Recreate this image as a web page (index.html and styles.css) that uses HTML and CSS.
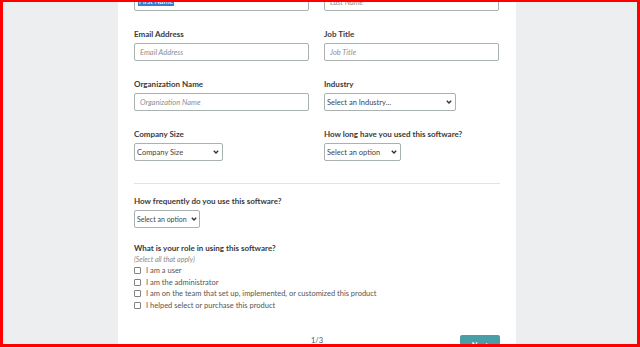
FILE: index.html
```html
<!DOCTYPE html>
<html lang="en">
<head>
    <meta charset="UTF-8">
    <meta name="viewport" content="width=device-width, initial-scale=1.0">
    <title>Review - Step 1</title>
    <link rel="stylesheet" href="styles.css">
</head>
<body>
    <div class="frame">
        <main class="card">
            <form class="survey">
                <div class="row">
                    <div class="field">
                        <label>First Name</label>
                        <div class="input fake-input"><span class="selected">First Name</span></div>
                    </div>
                    <div class="field">
                        <label>Last Name</label>
                        <input class="input" type="text" placeholder="Last Name">
                    </div>
                </div>

                <div class="row">
                    <div class="field">
                        <label for="email">Email Address</label>
                        <input class="input" id="email" type="text" placeholder="Email Address">
                    </div>
                    <div class="field">
                        <label for="job">Job Title</label>
                        <input class="input" id="job" type="text" placeholder="Job Title">
                    </div>
                </div>

                <div class="row">
                    <div class="field">
                        <label for="org">Organization Name</label>
                        <input class="input" id="org" type="text" placeholder="Organization Name">
                    </div>
                    <div class="field">
                        <label for="industry">Industry</label>
                        <div class="select-wrap select-industry">
                            <select class="select" id="industry">
                                <option>Select an Industry...</option>
                            </select>
                            <svg class="chevron" viewBox="0 0 6 4"><path d="M0.8 0.8 L3 3 L5.2 0.8" /></svg>
                        </div>
                    </div>
                </div>

                <div class="row">
                    <div class="field">
                        <label for="size">Company Size</label>
                        <div class="select-wrap select-size">
                            <select class="select" id="size">
                                <option>Company Size</option>
                            </select>
                            <svg class="chevron" viewBox="0 0 6 4"><path d="M0.8 0.8 L3 3 L5.2 0.8" /></svg>
                        </div>
                    </div>
                    <div class="field">
                        <label for="used">How long have you used this software?</label>
                        <div class="select-wrap select-option">
                            <select class="select" id="used">
                                <option>Select an option</option>
                            </select>
                            <svg class="chevron" viewBox="0 0 6 4"><path d="M0.8 0.8 L3 3 L5.2 0.8" /></svg>
                        </div>
                    </div>
                </div>

                <hr class="divider">

                <div class="field">
                    <label for="freq">How frequently do you use this software?</label>
                    <div class="select-wrap select-short">
                        <select class="select" id="freq">
                            <option>Select an option</option>
                        </select>
                        <svg class="chevron" viewBox="0 0 6 4"><path d="M0.8 0.8 L3 3 L5.2 0.8" /></svg>
                    </div>
                </div>

                <div class="role">
                    <p class="role-title">What is your role in using this software?</p>
                    <p class="hint">(Select all that apply)</p>
                    <label class="check"><input type="checkbox"> I am a user</label>
                    <label class="check"><input type="checkbox"> I am the administrator</label>
                    <label class="check"><input type="checkbox"> I am on the team that set up, implemented, or customized this product</label>
                    <label class="check"><input type="checkbox"> I helped select or purchase this product</label>
                </div>

                <div class="footer">
                    <span></span>
                    <span class="step">1/3</span>
                    <button type="button" class="next-btn">Next</button>
                </div>
            </form>
        </main>
    </div>
</body>
</html>
```

FILE: styles.css
```css
* {
    box-sizing: border-box;
}
html, body {
    margin: 0;
    height: 100%;
}
body {
    font-family: 'Lato', 'Liberation Sans', sans-serif;
    color: #333;
    overflow: hidden;
}
.frame {
    height: 347px;
    border: 3px solid #f00;
    border-top-width: 2px;
    background-color: #eceef0;
    overflow: hidden;
}
.card {
    display: flow-root;
    margin-left: 115px;
    width: 398px;
    height: 100%;
    background-color: #fff;
    padding: 0 16px;
}
.survey {
    margin-top: -23px;
}
.row {
    display: grid;
    grid-template-columns: 175px 175px;
    column-gap: 15px;
    margin-bottom: 18px;
}
.field label {
    display: block;
    font-size: 8px;
    line-height: 10px;
    font-weight: 700;
    color: #3a3a3a;
    margin-bottom: 4px;
}
.input {
    display: block;
    width: 175px;
    height: 18px;
    border: 1px solid #a9b1b1;
    border-radius: 2px;
    padding: 0 5px;
    font-family: inherit;
    font-size: 7.5px;
    color: #444;
    background: #fff;
}
.input::placeholder {
    font-style: italic;
    color: #8f8f8f;
}
.fake-input {
    display: flex;
    align-items: flex-end;
    padding: 0 3px 4px;
}
.selected {
    background-color: #3a7bd5;
    color: #fff;
    font-style: italic;
    line-height: 8px;
    padding: 0 1px;
}
.select-wrap {
    position: relative;
    height: 18px;
}
.select {
    display: block;
    width: 100%;
    height: 18px;
    appearance: none;
    -webkit-appearance: none;
    border: 1px solid #a9b1b1;
    border-radius: 2px;
    padding: 0 12px 0 2px;
    font-family: inherit;
    font-size: 7.5px;
    color: #444;
    background: #fff;
}
.chevron {
    position: absolute;
    right: 4px;
    top: 7px;
    width: 6px;
    height: 4px;
    fill: none;
    stroke: #333;
    stroke-width: 1.4;
    pointer-events: none;
}
.select-industry {
    width: 132px;
}
.select-size {
    width: 89px;
}
.select-option {
    width: 77px;
}
.select-short {
    width: 66px;
}
.select-short .select {
    font-size: 7px;
    padding-right: 8px;
}
.select-short .chevron {
    right: 3px;
}
.divider {
    border: none;
    border-top: 1px solid #e2e4e4;
    margin: 22px 0 12px;
}
.role {
    margin-top: 15px;
}
.role-title {
    margin: 0;
    font-size: 8px;
    line-height: 10px;
    font-weight: 700;
    color: #3a3a3a;
}
.hint {
    margin: 2px 0 1px;
    font-size: 7px;
    line-height: 9px;
    font-style: italic;
    color: #8a8a8a;
}
.check {
    display: flex;
    align-items: center;
    height: 11.5px;
    font-size: 7.5px;
    color: #555;
}
.check input {
    appearance: none;
    -webkit-appearance: none;
    margin: 0 5px 0 0;
    width: 7px;
    height: 7px;
    border: 1px solid #808080;
    border-radius: 1px;
    background: #fff;
}
.footer {
    display: grid;
    grid-template-columns: 1fr auto 1fr;
    align-items: start;
    margin-top: 24px;
}
.step {
    font-size: 7.5px;
    line-height: 10px;
    color: #555;
    padding-top: 1px;
}
.next-btn {
    justify-self: end;
    width: 40px;
    height: 20px;
    border: none;
    border-radius: 2px;
    background-color: #4a9fa6;
    color: #fff;
    font-family: inherit;
    font-size: 7.5px;
    font-weight: 700;
}
```
